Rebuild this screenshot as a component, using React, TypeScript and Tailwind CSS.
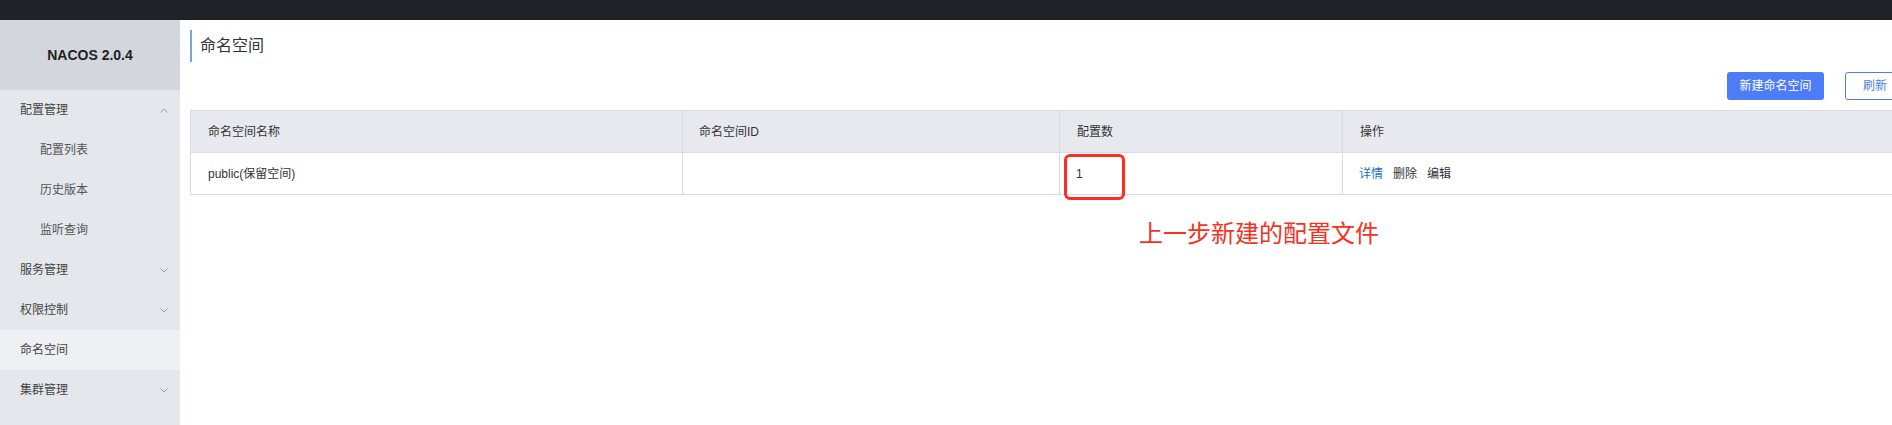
import React from "react";

const menu = [
  { label: "配置管理", level: 1, arrow: "up" },
  { label: "配置列表", level: 2 },
  { label: "历史版本", level: 2 },
  { label: "监听查询", level: 2 },
  { label: "服务管理", level: 1, arrow: "down" },
  { label: "权限控制", level: 1, arrow: "down" },
  { label: "命名空间", level: 1, active: true },
  { label: "集群管理", level: 1, arrow: "down" },
];

function Chevron({ dir }: { dir: string }) {
  return (
    <svg width="8" height="5" viewBox="0 0 8 5" className="mr-[2px] text-[#8f949c]">
      {dir === "up" ? (
        <polyline points="0.5,4.5 4,1 7.5,4.5" fill="none" stroke="currentColor" strokeWidth="0.9" />
      ) : (
        <polyline points="0.5,0.5 4,4 7.5,0.5" fill="none" stroke="currentColor" strokeWidth="0.9" />
      )}
    </svg>
  );
}

export default function App() {
  return (
    <div className="w-[1892px] h-[425px] flex flex-col overflow-hidden bg-white font-['Liberation_Sans','Noto_Sans_CJK_SC',sans-serif] text-[#333]">
      <div className="h-5 shrink-0 bg-[#1f2227]" />
      <div className="flex flex-1 min-h-0">
        <aside className="w-[180px] shrink-0 bg-[#e4e7ec] flex flex-col">
          <div className="h-[70px] bg-[#d3d7dd] flex items-center justify-center text-[14px] font-bold text-[#222]">
            NACOS 2.0.4
          </div>
          {menu.map((item) => (
            <div
              key={item.label}
              className={
                "h-10 flex items-center justify-between pr-[10px] text-[12px] " +
                (item.level === 2 ? "pl-10 text-[#555] " : "pl-5 text-[#444] ") +
                (item.active ? "bg-[#eef0f4]" : "")
              }
            >
              <span>{item.label}</span>
              {item.arrow && <Chevron dir={item.arrow} />}
            </div>
          ))}
        </aside>

        <main className="flex-1 min-w-0 overflow-hidden">
          <div className="w-[1725px] pl-[10px] pt-[10px]">
            <div className="h-8 flex items-center border-l-2 border-[#79a6da] pl-2 text-[16px] text-[#333]">
              命名空间
            </div>

            <div className="mt-[10px] flex justify-end gap-[21px]">
              <button className="h-7 w-[97px] rounded-[3px] bg-[#4c7cf6] text-white text-[12px]">
                新建命名空间
              </button>
              <button className="h-7 w-[60px] rounded-[3px] border border-[#4c7cf6] bg-white text-[#4c7cf6] text-[12px]">
                刷新
              </button>
            </div>

            <table className="mt-[10px] w-full table-fixed border-collapse text-[12px]">
              <colgroup>
                <col className="w-[492px]" />
                <col className="w-[377px]" />
                <col className="w-[283px]" />
                <col />
              </colgroup>
              <thead>
                <tr className="h-[42px] bg-[#e8e9ee] text-left">
                  <th className="border border-[#d9dbe0] px-[17px] font-normal">命名空间名称</th>
                  <th className="border border-[#d9dbe0] px-[16px] font-normal">命名空间ID</th>
                  <th className="border border-[#d9dbe0] px-[17px] font-normal">配置数</th>
                  <th className="border border-[#d9dbe0] px-[17px] font-normal">操作</th>
                </tr>
              </thead>
              <tbody>
                <tr className="h-[42px]">
                  <td className="border border-[#d9dbe0] px-[17px]">public(保留空间)</td>
                  <td className="border border-[#d9dbe0] px-[16px]"></td>
                  <td className="relative border border-[#d9dbe0] px-[16px]">
                    1
                    <div className="absolute left-[4px] top-[1px] w-[61px] h-[46px] rounded-[6px] border-[3px] border-[#ff2d1f]" />
                    <div className="absolute left-[79px] top-[66px] whitespace-nowrap text-[24px] leading-[30px] text-[#f8301e]">
                      上一步新建的配置文件
                    </div>
                  </td>
                  <td className="border border-[#d9dbe0] px-[16px]">
                    <div className="flex gap-[10px]">
                      <span className="text-[#1a6fce]">详情</span>
                      <span>删除</span>
                      <span>编辑</span>
                    </div>
                  </td>
                </tr>
              </tbody>
            </table>
          </div>
        </main>
      </div>
    </div>
  );
}
